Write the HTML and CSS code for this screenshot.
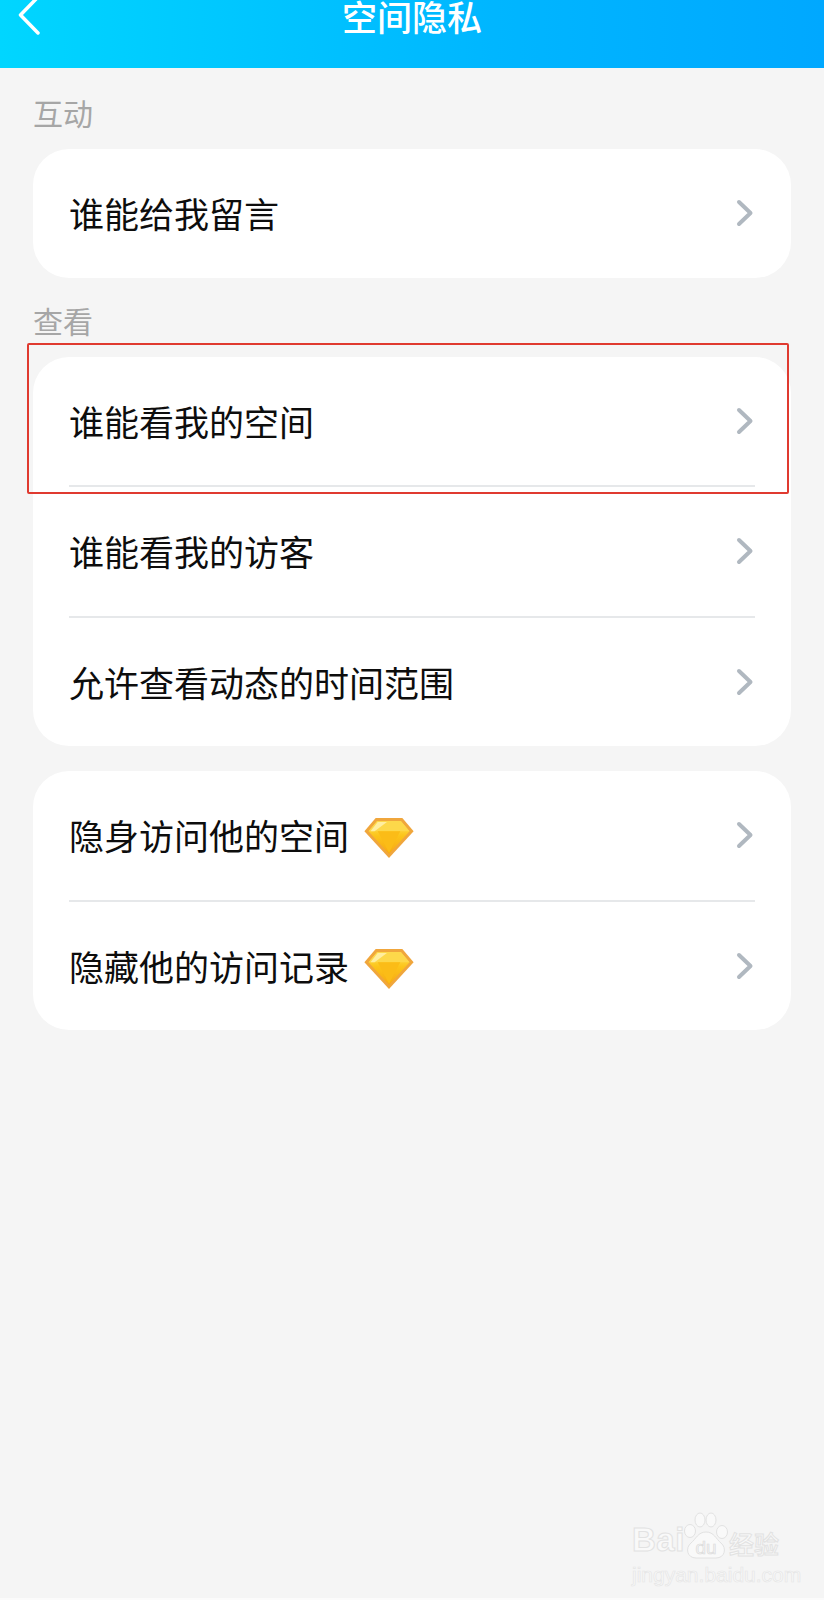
FILE: index.html
```html
<!DOCTYPE html>
<html lang="zh-CN">
<head>
<meta charset="utf-8">
<title>空间隐私</title>
<link rel="stylesheet" href="styles.css">
</head>
<body>
<div class="page">
  <header class="topbar">
    <svg class="back" width="40" height="40" viewBox="0 0 40 40"><path d="M38 -3 L20.500 15 L38 33"/></svg>
    <h1 class="title">空间隐私</h1>
  </header>
  <main class="content">
    <div class="label label-first">互动</div>
    <section class="card">
      <div class="row"><span class="row-text">谁能给我留言</span><svg class="chev" width="18" height="28" viewBox="0 0 18 28"><path d="M3 3 L14.500 14 L3 25"/></svg></div>
    </section>
    <div class="label">查看</div>
    <section class="card">
      <div class="row"><span class="row-text">谁能看我的空间</span><svg class="chev" width="18" height="28" viewBox="0 0 18 28"><path d="M3 3 L14.500 14 L3 25"/></svg></div>
      <div class="sep"></div>
      <div class="row"><span class="row-text">谁能看我的访客</span><svg class="chev" width="18" height="28" viewBox="0 0 18 28"><path d="M3 3 L14.500 14 L3 25"/></svg></div>
      <div class="sep"></div>
      <div class="row"><span class="row-text">允许查看动态的时间范围</span><svg class="chev" width="18" height="28" viewBox="0 0 18 28"><path d="M3 3 L14.500 14 L3 25"/></svg></div>
    </section>
    <section class="card card-gap">
      <div class="row"><span class="row-text">隐身访问他的空间</span>
        <svg class="gem" width="50" height="40" viewBox="2 2 48 39"><use href="#gem"/></svg>
        <svg class="chev" width="18" height="28" viewBox="0 0 18 28"><path d="M3 3 L14.500 14 L3 25"/></svg></div>
      <div class="sep"></div>
      <div class="row"><span class="row-text">隐藏他的访问记录</span>
        <svg class="gem" width="50" height="40" viewBox="2 2 48 39"><use href="#gem"/></svg>
        <svg class="chev" width="18" height="28" viewBox="0 0 18 28"><path d="M3 3 L14.500 14 L3 25"/></svg></div>
    </section>
  </main>
  <div class="highlight"></div>
  <div class="watermark">
    <div class="wm-top">
      <span class="wm-bai">Bai</span>
      <svg class="wm-paw" width="46" height="48" viewBox="0 0 46 48">
        <ellipse cx="7" cy="19" rx="5.500" ry="6.500"/><ellipse cx="17" cy="8" rx="5" ry="7"/><ellipse cx="28" cy="8" rx="5" ry="7"/><ellipse cx="39" cy="20" rx="5.500" ry="6.500"/>
        <path d="M23 20 C31 20 33 27 38 31 C44 36 42 46 33 46 L13 46 C4 46 2 36 8 31 C13 27 15 20 23 20 Z"/>
        <text x="23" y="42" class="wm-du">du</text>
      </svg>
      <span class="wm-cn">经验</span>
    </div>
    <div class="wm-url">jingyan.baidu.com</div>
  </div>
</div>
<svg class="defs" width="0" height="0">
  <defs>
    <linearGradient id="gemFill" x1="0" y1="0" x2="0" y2="1">
      <stop offset="0" stop-color="#ffe45c"/><stop offset="0.45" stop-color="#fcc419"/><stop offset="1" stop-color="#f7a814"/>
    </linearGradient>
    <g id="gem">
      <path d="M13 2 H39 L50 15 L26 41 L2 15 Z" fill="#f0a63c"/>
      <path d="M14.500 5 H37.500 L46 15 L26 37 L6 15 Z" fill="url(#gemFill)"/>
      <path d="M14.500 5 H37.500 L46 15 H6 Z" fill="#fdd84a"/>
      <path d="M15 6 L24 6 L12 15 H8 Z" fill="#ffeea0"/>
      <path d="M15 15 H37 L26 36 Z" fill="#fbbc17"/>
    </g>
  </defs>
</svg>
</body>
</html>
```
FILE: styles.css
```css
* { box-sizing: border-box; }
html, body { margin: 0; padding: 0; }
body {
  background: #f5f5f5;
  font-family: "Noto Sans CJK SC", "Noto Sans", sans-serif;
  overflow: hidden;
}
.page {
  position: relative;
  width: 824px;
  height: 1600px;
  background: #f5f5f5;
  border-bottom: 2px solid #fbfbfb;
  overflow: hidden;
}
.topbar {
  position: relative;
  height: 68px;
  background: linear-gradient(90deg, #00d6ff 0%, #00b6ff 60%, #00a8ff 100%);
  overflow: hidden;
}
.back {
  position: absolute;
  left: 0;
  top: 0;
  overflow: visible;
}
.back path {
  fill: none;
  stroke: #fff;
  stroke-width: 3.500;
  stroke-linecap: round;
  stroke-linejoin: round;
}
.title {
  margin: 0;
  text-align: center;
  font-size: 35px;
  font-weight: 500;
  line-height: 32px;
  color: #fff;
}
.content {
  padding: 0 33px;
}
.label {
  height: 40px;
  margin-top: 22px;
  margin-bottom: 17px;
  font-size: 30px;
  line-height: 40px;
  color: #a6a6a6;
}
.label-first {
  margin-top: 24px;
  margin-bottom: 17px;
}
.card {
  background: #fff;
  border-radius: 36px;
}
.card-gap { margin-top: 25px; }
.row {
  display: flex;
  align-items: center;
  height: 128.500px;
  padding: 0 37px 0 36px;
}
.row-text {
  font-size: 35px;
  line-height: 46px;
  color: #0d0d0d;
}
.gem {
  margin-left: 15px;
  margin-top: 6px;
  flex: none;
}
.chev {
  margin-left: auto;
  flex: none;
}
.chev path {
  fill: none;
  stroke: #b0b8c0;
  stroke-width: 4;
  stroke-linecap: round;
  stroke-linejoin: round;
}
.sep {
  height: 2px;
  margin: 0 36px;
  background: #e6e8ea;
}
.highlight {
  position: absolute;
  left: 27px;
  top: 343px;
  width: 762px;
  height: 151px;
  border: 2px solid #e03a30;
  border-radius: 2px;
}
.watermark {
  position: absolute;
  left: 632px;
  top: 1512px;
  width: 150px;
}
.wm-top {
  display: flex;
  align-items: flex-end;
  height: 48px;
}
.wm-bai, .wm-cn, .wm-url {
  color: #f9f9f9;
  -webkit-text-stroke: 1px #e2e2e2;
}
.wm-bai {
  font-family: "Liberation Sans", sans-serif;
  font-size: 33px;
  font-weight: 700;
  line-height: 40px;
  width: 51px;
  letter-spacing: 0.500px;
}
.wm-paw {
  flex: none;
}
.wm-paw ellipse, .wm-paw path {
  fill: #f9f9f9;
  stroke: #e2e2e2;
  stroke-width: 1;
}
.wm-du {
  font-family: "Liberation Sans", sans-serif;
  font-size: 19px;
  text-anchor: middle;
  fill: #f5f5f5;
  stroke: #dcdcdc;
  stroke-width: 0.700;
}
.wm-cn {
  font-size: 25px;
  line-height: 34px;
  font-weight: 500;
  white-space: nowrap;
}
.wm-url {
  margin-top: 4px;
  font-family: "Liberation Sans", sans-serif;
  font-size: 21px;
  line-height: 22px;
  white-space: nowrap;
  -webkit-text-stroke: 0.700px #e6e6e6;
}
.defs {
  position: absolute;
}
```
